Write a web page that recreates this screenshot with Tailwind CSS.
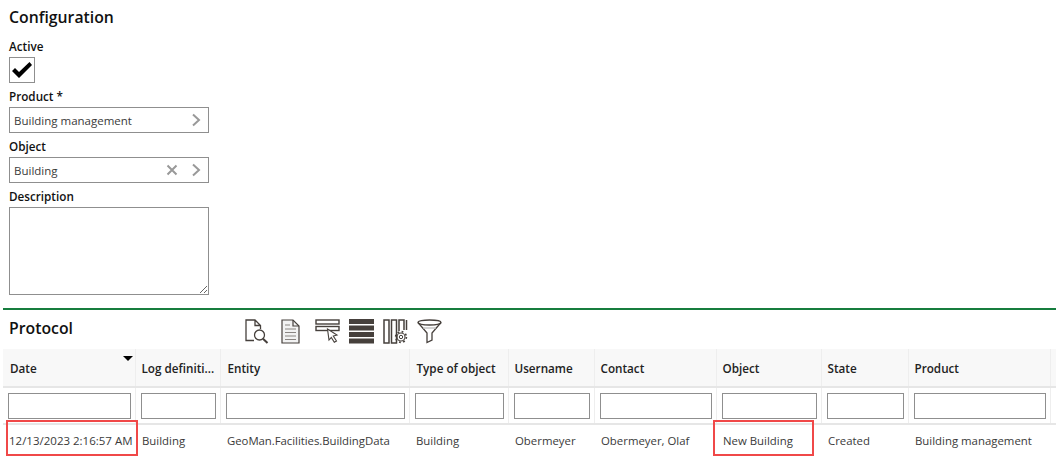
<!DOCTYPE html>
<html lang="en">
<head>
  <meta charset="UTF-8">
  <title>Configuration</title>
  <script src="https://cdn.jsdelivr.net/npm/@tailwindcss/browser@4"></script>
</head>
<body class="bg-white font-['Open_Sans',sans-serif] text-[11.5px] text-[#3a3a3a] overflow-hidden">
  <div class="relative w-[1056px] h-[456px] overflow-hidden">

    <!-- configuration form -->
    <div class="pl-[9px] h-[308px] pt-[7px]">
      <h2 class="text-[15.8px] leading-[20px] font-semibold text-[#111]">Configuration</h2>
      <div class="mt-[12px] text-[11.7px] leading-[15px] font-semibold text-[#111]">Active</div>
      <div class="mt-[3px] w-[26px] h-[26px] border border-[#8f8f8f] flex items-center justify-center">
        <svg width="22" height="20" viewBox="0 0 22 20"><path d="M1 11 L4 8 L8 12 L18.500 2 L21 5 L8 18 Z" fill="#000"/></svg>
      </div>
      <div class="mt-[6px] text-[11.7px] leading-[15px] font-semibold text-[#111]">Product *</div>
      <div class="mt-[3px] w-[200px] h-[26px] border border-[#8f8f8f] flex items-center pl-[4px] pr-[7px]">
        <span class="flex-1 pt-[1px]">Building management</span>
        <svg width="10" height="14" viewBox="0 0 10 14"><path d="M2 1.500 L8 7 L2 12.500" fill="none" stroke="#999" stroke-width="2"/></svg>
      </div>
      <div class="mt-[6px] text-[11.7px] leading-[15px] font-semibold text-[#111]">Object</div>
      <div class="mt-[3px] w-[200px] h-[26px] border border-[#8f8f8f] flex items-center pl-[4px] pr-[7px]">
        <span class="flex-1 pt-[1px]">Building</span>
        <svg class="mr-[13px]" width="12" height="12" viewBox="0 0 12 12"><path d="M1.500 1.500 L10.500 10.500 M10.500 1.500 L1.500 10.500" fill="none" stroke="#999" stroke-width="2"/></svg>
        <svg width="10" height="14" viewBox="0 0 10 14"><path d="M2 1.500 L8 7 L2 12.500" fill="none" stroke="#999" stroke-width="2"/></svg>
      </div>
      <div class="mt-[6px] text-[11.7px] leading-[15px] font-semibold text-[#111]">Description</div>
      <textarea class="block mt-[3px] w-[200px] h-[88px] border border-[#8f8f8f]"></textarea>
    </div>

    <div class="ml-[3px] h-[2px] bg-[#167d3e]"></div>

    <!-- protocol -->
    <div class="pl-[3px]">
      <div class="flex items-start h-[39px]">
        <h2 class="w-[242px] pl-[6px] pt-[8px] text-[15.8px] leading-[20px] font-semibold text-[#111]">Protocol</h2>
        <div class="flex mt-[9px] text-[#46403c]">
          <svg class="w-[24px] h-[25px]" viewBox="0 0 24 25" fill="none" stroke="currentColor" stroke-width="1.300">
            <path d="M9 21.500 H1 V1 H10 L15.500 6.500 V10 M10 1 V6.500 H15.500"/><circle cx="14.500" cy="16" r="5"/><path d="M18 19.700 L22.500 24" stroke-width="2"/>
          </svg>
          <svg class="ml-[12px] w-[19px] h-[25px]" viewBox="0 0 19 25" fill="#f2f2f2" stroke="currentColor" stroke-width="1.200">
            <path d="M1 1 H12 L18 7 V24 H1 Z"/><path d="M12 1 V7 H18" fill="none"/><path d="M4 6 H9 M4 10 H15 M4 13.500 H15 M4 17 H15 M4 20.500 H15" stroke="#8a8582" fill="none"/>
          </svg>
          <svg class="ml-[15px] w-[25px] h-[25px]" viewBox="0 0 25 25" fill="none" stroke="currentColor" stroke-width="1.400">
            <rect x="1" y="1" width="23" height="4"/><rect x="1" y="7.500" width="23" height="4"/>
            <path d="M12.500 10 L22 16 L18.300 17 L21.500 22 L19.300 23.300 L16.300 18.500 L14 21 Z" fill="#fff" stroke-width="1.100"/>
          </svg>
          <svg class="ml-[9px] w-[25px] h-[25px]" viewBox="0 0 25 25" fill="currentColor">
            <rect y="0" width="25" height="5"/><rect y="6.500" width="25" height="5"/><rect y="13" width="25" height="5"/><rect y="19.500" width="25" height="5"/>
          </svg>
          <svg class="ml-[9px] w-[25px] h-[25px]" viewBox="0 0 25 25" fill="none" stroke="currentColor" stroke-width="1.500">
            <rect x="1" y="1" width="5" height="23"/><rect x="8.500" y="1" width="5" height="23"/><path d="M16 12 V1 H21 V11"/><path d="M23.500 1 V11"/>
            <circle cx="18" cy="18" r="1.700" stroke-width="1"/><circle cx="18" cy="18" r="4" stroke-width="1.100"/><circle cx="18" cy="18" r="5.400" stroke-width="1.600" stroke-dasharray="1.800 2.440"/>
          </svg>
          <svg class="ml-[9px] w-[25px] h-[25px]" viewBox="0 0 25 25" fill="none" stroke="currentColor" stroke-width="1.300">
            <ellipse cx="12.500" cy="3.500" rx="11.500" ry="2.500"/><path d="M1 3.500 L10 14 V23.500 L15 21 V14 L24 3.500"/><path d="M6 9 H19" stroke="#bbb"/>
          </svg>
        </div>
      </div>

      <table class="table-fixed w-[1053px] border-collapse">
        <colgroup>
          <col class="w-[132px]"><col class="w-[85px]"><col class="w-[189px]"><col class="w-[99px]"><col class="w-[86px]"><col class="w-[122px]"><col class="w-[105px]"><col class="w-[87px]"><col class="w-[142px]"><col>
        </colgroup>
        <thead>
          <tr class="bg-[#f8f8f8] h-[38px] border-b-2 border-[#e6e6e6] text-left text-[11.7px] text-[#222]">
            <th class="relative pl-[7px] pt-[3px] font-semibold border-r border-[#eeeeee]">Date<span class="absolute right-[2px] top-[7px] w-0 h-0 border-x-[5px] border-x-transparent border-t-[5px] border-t-black"></span></th>
            <th class="pl-[6px] pt-[3px] font-semibold border-r border-[#eeeeee] whitespace-nowrap overflow-hidden">Log definiti...</th>
            <th class="pl-[7px] pt-[3px] font-semibold border-r border-[#eeeeee]">Entity</th>
            <th class="pl-[7px] pt-[3px] font-semibold border-r border-[#eeeeee]">Type of object</th>
            <th class="pl-[6px] pt-[3px] font-semibold border-r border-[#eeeeee]">Username</th>
            <th class="pl-[6px] pt-[3px] font-semibold border-r border-[#eeeeee]">Contact</th>
            <th class="pl-[6px] pt-[3px] font-semibold border-r border-[#eeeeee]">Object</th>
            <th class="pl-[6px] pt-[3px] font-semibold border-r border-[#eeeeee]">State</th>
            <th class="pl-[6px] pt-[3px] font-semibold border-r border-[#eeeeee]">Product</th>
            <th></th>
          </tr>
          <tr class="h-[37px] border-b-2 border-[#e6e6e6]">
            <td class="pl-[5px] pr-[4px] border-r border-[#eeeeee]"><input class="block w-full h-[26px] border border-[#8f8f8f]"></td>
            <td class="pl-[5px] pr-[4px] border-r border-[#eeeeee]"><input class="block w-full h-[26px] border border-[#8f8f8f]"></td>
            <td class="pl-[5px] pr-[4px] border-r border-[#eeeeee]"><input class="block w-full h-[26px] border border-[#8f8f8f]"></td>
            <td class="pl-[5px] pr-[4px] border-r border-[#eeeeee]"><input class="block w-full h-[26px] border border-[#8f8f8f]"></td>
            <td class="pl-[5px] pr-[4px] border-r border-[#eeeeee]"><input class="block w-full h-[26px] border border-[#8f8f8f]"></td>
            <td class="pl-[5px] pr-[4px] border-r border-[#eeeeee]"><input class="block w-full h-[26px] border border-[#8f8f8f]"></td>
            <td class="pl-[5px] pr-[4px] border-r border-[#eeeeee]"><input class="block w-full h-[26px] border border-[#8f8f8f]"></td>
            <td class="pl-[5px] pr-[4px] border-r border-[#eeeeee]"><input class="block w-full h-[26px] border border-[#8f8f8f]"></td>
            <td class="pl-[5px] pr-[4px] border-r border-[#eeeeee]"><input class="block w-full h-[26px] border border-[#8f8f8f]"></td>
            <td></td>
          </tr>
        </thead>
        <tbody>
          <tr class="h-[32px] border-b border-[#e6e6e6] whitespace-nowrap text-[11.400px]">
            <td class="pl-[6px] overflow-hidden text-[11.500px]">12/13/2023 2:16:57 AM</td>
            <td class="pl-[7px]">Building</td>
            <td class="pl-[7px] tracking-[-0.05px]">GeoMan.Facilities.BuildingData</td>
            <td class="pl-[7px]">Building</td>
            <td class="pl-[7px]">Obermeyer</td>
            <td class="pl-[7px]">Obermeyer, Olaf</td>
            <td class="pl-[7px]">New Building</td>
            <td class="pl-[7px]">Created</td>
            <td class="pl-[7px]">Building management</td>
            <td></td>
          </tr>
        </tbody>
      </table>
    </div>

    <!-- red highlight boxes over the row -->
    <div class="absolute left-[6px] top-[420px] w-[132px] h-[36px] border-2 border-[#f04848]"></div>
    <div class="absolute left-[713px] top-[420px] w-[101px] h-[36px] border-2 border-[#f04848]"></div>
  </div>
</body>
</html>
